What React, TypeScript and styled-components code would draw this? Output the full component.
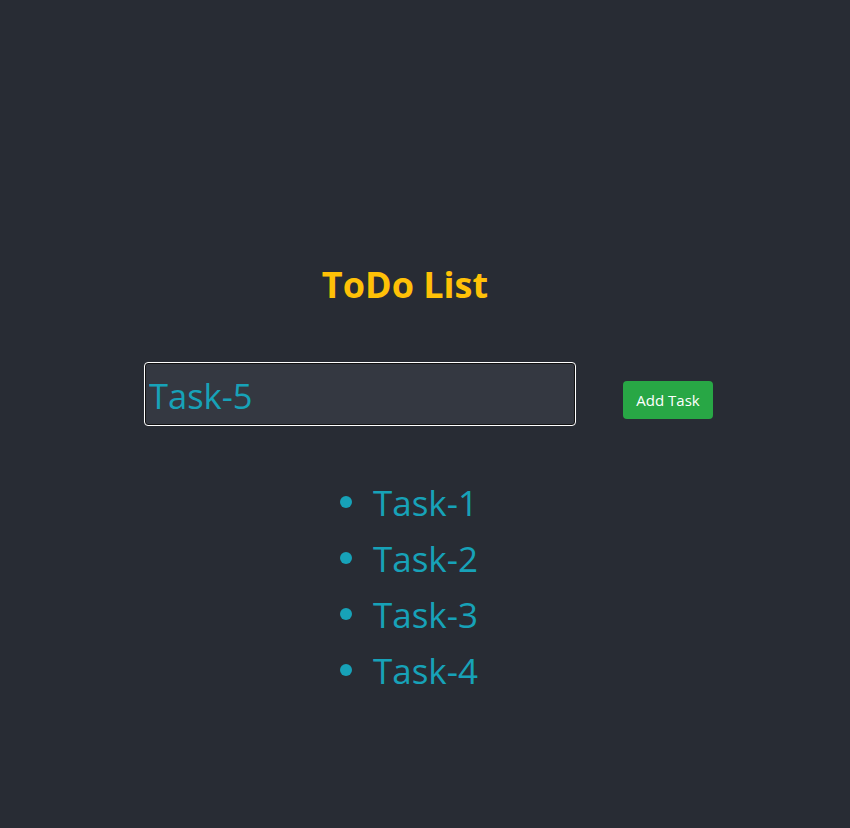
import React from "react";
import styled, { createGlobalStyle } from "styled-components";

const Global = createGlobalStyle`
  html, body { margin: 0; padding: 0; background: #282c34; }
  body { font-family: "Open Sans", "Noto Sans", sans-serif; }
`;

const Page = styled.div`
  min-height: 828px;
  background: #282c34;
  display: flex;
  flex-direction: column;
  align-items: center;
  padding-top: 262px;
  box-sizing: border-box;
`;

const Title = styled.h1`
  margin: 0 40px 0 0;
  font-size: 36px;
  font-weight: 700;
  color: #ffc107;
  line-height: 46px;
`;

const Form = styled.form`
  display: flex;
  align-items: flex-start;
  gap: 47px;
  margin: 54px 0 0 7px;
`;

const Input = styled.input`
  width: 432px;
  height: 64px;
  box-sizing: border-box;
  background: #343841;
  border: 1px solid #ffffff;
  box-shadow: inset 0 0 0 1px #111;
  border-radius: 4px;
  padding: 2px 4px 0;
  font-family: inherit;
  font-size: 34.5px;
  color: #17a2b8;
  outline: none;
`;

const Button = styled.button`
  width: 90px;
  height: 38px;
  margin-top: 19px;
  background: #28a745;
  color: #fff;
  border: none;
  border-radius: 4px;
  font-family: inherit;
  font-size: 15px;
  cursor: pointer;
`;

const List = styled.ul`
  list-style: none;
  margin: 48px 32px 0 0;
  padding: 0;
`;

const Item = styled.li`
  display: flex;
  align-items: center;
  gap: 21px;
  height: 56px;
  font-size: 35px;
  color: #17a2b8;
`;

const Bullet = styled.span`
  width: 12px;
  height: 12px;
  border-radius: 50%;
  background: #17a2b8;
`;

export default function App() {
  const tasks = ["Task-1", "Task-2", "Task-3", "Task-4"];
  return (
    <>
      <Global />
      <Page>
        <Title>ToDo List</Title>
        <Form onSubmit={(e) => e.preventDefault()}>
          <Input defaultValue="Task-5" />
          <Button type="submit">Add Task</Button>
        </Form>
        <List>
          {tasks.map((t) => (
            <Item key={t}>
              <Bullet />
              {t}
            </Item>
          ))}
        </List>
      </Page>
    </>
  );
}
